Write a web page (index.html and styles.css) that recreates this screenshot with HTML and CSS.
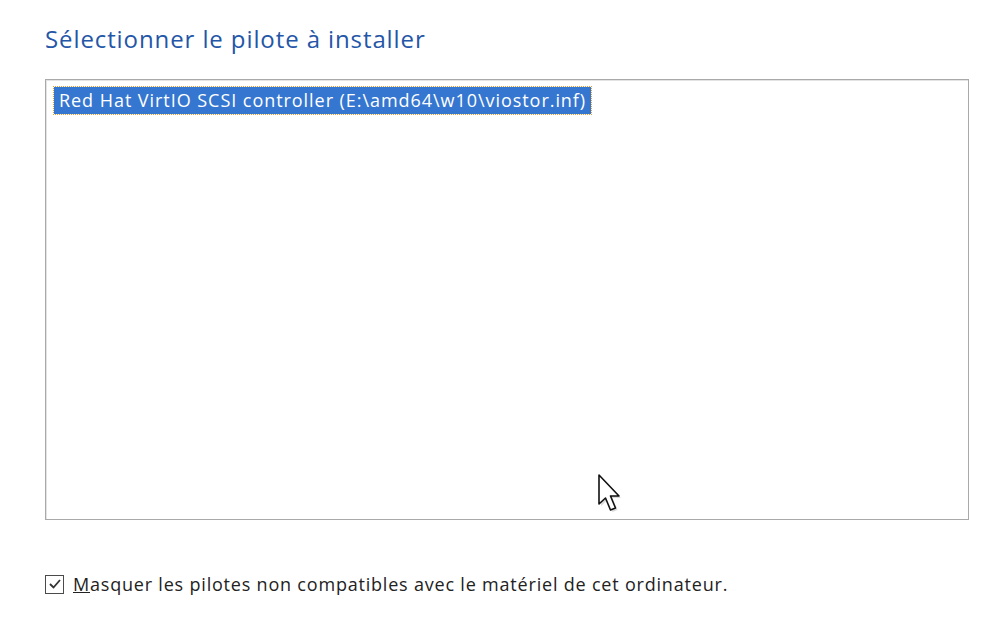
FILE: index.html
```html
<!DOCTYPE html>
<html lang="fr">
<head>
  <meta charset="UTF-8">
  <title>Sélectionner le pilote à installer</title>
  <link rel="stylesheet" href="styles.css">
</head>
<body>
  <div class="page">
    <h1 class="title">Sélectionner le pilote à installer</h1>

    <div class="driver-list">
      <div class="driver-item selected">Red Hat VirtIO SCSI controller (E:\amd64\w10\viostor.inf)</div>

      <!-- mouse pointer resting over the list -->
      <svg class="pointer" width="32" height="44" viewBox="0 0 32 44">
        <path d="M3 2 L3 31 L9.5 25 L14.5 37 L19.5 35 L14.5 23 L23 23 Z" fill="#999" opacity="0.35" transform="translate(2 2)"/>
        <path d="M3 2 L3 31 L9.5 25 L14.5 37 L19.5 35 L14.5 23 L23 23 Z" fill="#fff" stroke="#111" stroke-width="1.6" stroke-linejoin="round"/>
      </svg>
    </div>

    <label class="option">
      <span class="checkbox">
        <svg width="16" height="16" viewBox="0 0 16 16">
          <path d="M3 8 L6.5 11.5 L13 4" fill="none" stroke="#333" stroke-width="1.8"/>
        </svg>
      </span>
      <span><u>M</u>asquer les pilotes non compatibles avec le matériel de cet ordinateur.</span>
    </label>
  </div>
</body>
</html>
```

FILE: styles.css
```css
body {
  margin: 0;
  background: #fff;
  font-family: "Open Sans", "Noto Sans", sans-serif;
  color: #1a1a1a;
}
.page {
  padding: 22px 32px 0 45px;
}
.title {
  margin: 0 0 23px;
  font-size: 24px;
  letter-spacing: 0.9px;
  font-weight: normal;
  color: #2456a8;
  line-height: 34px;
}
.driver-list {
  position: relative;
  width: 924px;
  height: 441px;
  border: 1px solid #a9a9a9;
  box-shadow: inset 1px 1px 0 #e3e3e3;
  padding: 7px 8px;
  box-sizing: border-box;
}
.driver-item {
  display: inline-block;
  font-size: 18px;
  letter-spacing: 0.95px;
  line-height: 27px;
  padding: 0 5px;
  color: #fff;
}
.driver-item.selected {
  background: #3576d0;
  outline: 1px dotted #e0a040;
}
.pointer {
  position: absolute;
  left: 550px;
  top: 393px;
}
.option {
  display: flex;
  align-items: center;
  gap: 9px;
  margin-top: 52px;
  font-size: 18px;
  letter-spacing: 0.8px;
  color: #222;
}
.checkbox {
  width: 19px;
  height: 19px;
  border: 1px solid #4a4a4a;
  box-sizing: border-box;
  display: flex;
  align-items: center;
  justify-content: center;
}
.checkbox svg {
  flex: none;
}
```
